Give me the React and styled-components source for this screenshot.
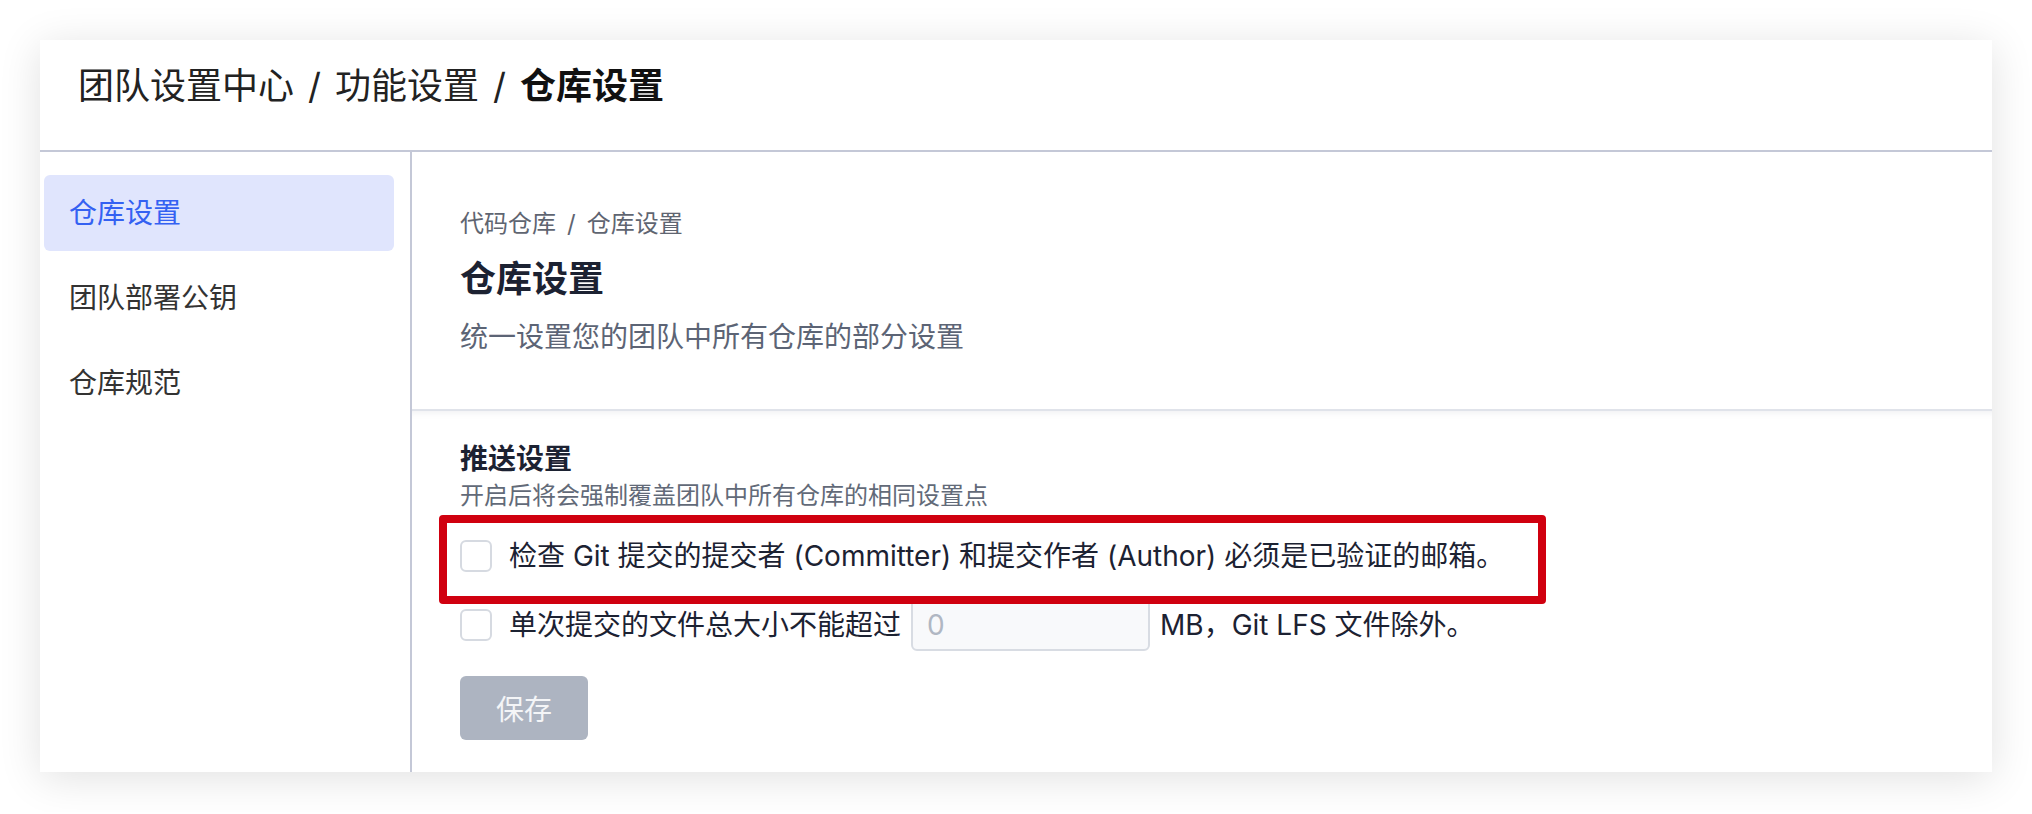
import styled, { createGlobalStyle } from 'styled-components'

const GlobalStyle = createGlobalStyle`
  html, body {
    margin: 0;
    padding: 0;
    background: #ffffff;
    font-family: Inter, "Noto Sans CJK SC", sans-serif;
  }
`

const Page = styled.div`
  padding: 40px;
`

const Card = styled.div`
  background: #fff;
  box-shadow: 0 6px 40px rgba(0, 0, 0, 0.12);
`

const Header = styled.div`
  height: 112px;
  box-sizing: border-box;
  display: flex;
  align-items: center;
  padding: 0 0 18px 38px;
  border-bottom: 2px solid #c4c8d7;
  font-size: 36px;
  line-height: 50px;
  color: #222;
  b {
    font-weight: 700;
    color: #111;
  }
`

const Slash = styled.span`
  margin: 0 ${p => p.gap || 14}px;
`

const Body = styled.div`
  display: flex;
`

const Sidebar = styled.div`
  width: 350px;
  padding: 23px 16px 0 4px;
  border-right: 2px solid #c4c8d7;
  display: flex;
  flex-direction: column;
  gap: 9px;
`

const NavItem = styled.div`
  height: 76px;
  display: flex;
  align-items: center;
  padding-left: 25px;
  border-radius: 6px;
  font-size: 28px;
  line-height: 40px;
  color: ${p => (p.active ? '#3461f2' : '#333')};
  background: ${p => (p.active ? '#e0e5fd' : 'transparent')};
`

const Content = styled.div`
  flex: 1;
`

const Intro = styled.div`
  padding: 54px 48px 51px;
`

const Crumb = styled.div`
  font-size: 24px;
  line-height: 36px;
  color: #5f6571;
`

const Title = styled.h1`
  margin: 12px 0 0;
  font-size: 36px;
  line-height: 50px;
  font-weight: 700;
  color: #1c2232;
`

const Desc = styled.p`
  margin: 12px 0 0;
  font-size: 28px;
  line-height: 42px;
  color: #5c6475;
`

const Section = styled.div`
  position: relative;
  padding: 28px 48px 32px;
  border-top: 2px solid #e0e3ea;
  box-shadow: inset 0 8px 8px -8px rgba(30, 40, 70, 0.1);
`

const SectionTitle = styled.div`
  font-size: 28px;
  line-height: 40px;
  font-weight: 700;
  color: #1c2232;
`

const SectionHint = styled.div`
  font-size: 24px;
  line-height: 34px;
  color: #626a78;
`

const Options = styled.div`
  margin-top: 16px;
  display: flex;
  flex-direction: column;
  gap: 16px;
`

const Row = styled.label`
  height: 53px;
  display: flex;
  align-items: center;
  font-size: 28px;
  line-height: 40px;
  color: #1c2232;
  white-space: pre;
`

const Box = styled.span`
  width: 28px;
  height: 28px;
  margin-right: 17px;
  border: 2px solid #d6dae1;
  border-radius: 6px;
  background: #fff;
  flex-shrink: 0;
`

const SizeInput = styled.div`
  box-sizing: border-box;
  width: 239px;
  height: 53px;
  margin: 0 10px;
  padding-left: 14px;
  display: flex;
  align-items: center;
  border: 2px solid #d8dce3;
  border-radius: 6px;
  background: #f8f9fb;
  color: #b0b7c3;
  font-size: 28px;
`

const SaveButton = styled.button`
  margin-top: 25px;
  width: 128px;
  height: 64px;
  border: none;
  border-radius: 6px;
  background: #adb4c1;
  color: #f4f5f7;
  font-family: inherit;
  font-size: 28px;
`

const Highlight = styled.div`
  position: absolute;
  left: 27px;
  top: 104px;
  width: 1107px;
  height: 89px;
  box-sizing: border-box;
  border: 8px solid #d0000f;
  border-radius: 4px;
  pointer-events: none;
`

const App = () => {
  return (
    <Page>
      <GlobalStyle />
      <Card>
        <Header>
          团队设置中心<Slash>/</Slash>功能设置<Slash>/</Slash><b>仓库设置</b>
        </Header>
        <Body>
          <Sidebar>
            <NavItem active>仓库设置</NavItem>
            <NavItem>团队部署公钥</NavItem>
            <NavItem>仓库规范</NavItem>
          </Sidebar>
          <Content>
            <Intro>
              <Crumb>代码仓库<Slash gap={11}>/</Slash>仓库设置</Crumb>
              <Title>仓库设置</Title>
              <Desc>统一设置您的团队中所有仓库的部分设置</Desc>
            </Intro>
            <Section>
              <SectionTitle>推送设置</SectionTitle>
              <SectionHint>开启后将会强制覆盖团队中所有仓库的相同设置点</SectionHint>
              <Options>
                <Row>
                  <Box />
                  检查 Git 提交的提交者 (Committer) 和提交作者 (Author) 必须是已验证的邮箱。
                </Row>
                <Row>
                  <Box />
                  单次提交的文件总大小不能超过
                  <SizeInput>0</SizeInput>
                  MB，Git LFS 文件除外。
                </Row>
              </Options>
              <SaveButton>保存</SaveButton>
              <Highlight />
            </Section>
          </Content>
        </Body>
      </Card>
    </Page>
  )
}

export default App
